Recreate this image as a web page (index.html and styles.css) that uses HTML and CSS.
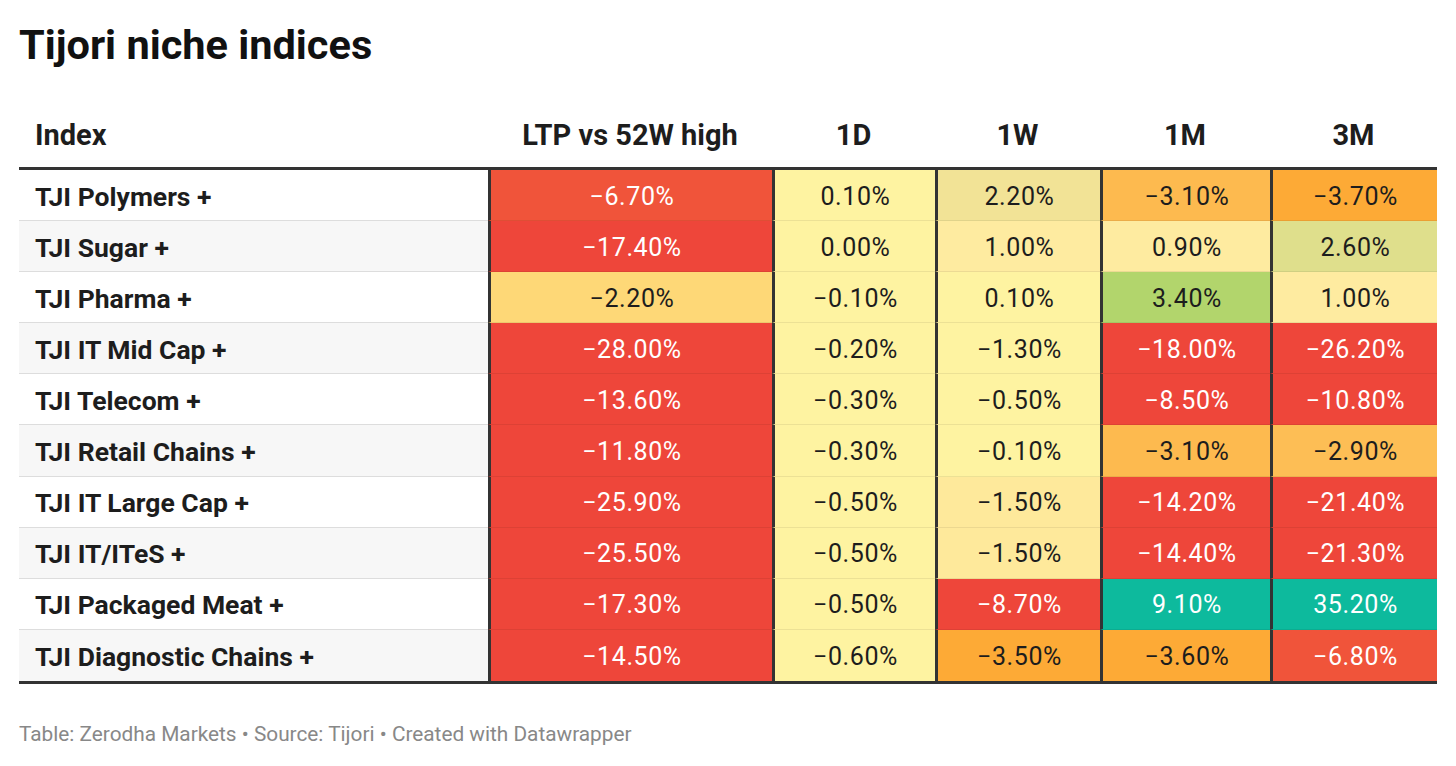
FILE: index.html
```html
<!DOCTYPE html>
<html lang="en">
<head>
<meta charset="utf-8">
<title>Tijori niche indices</title>
<link rel="stylesheet" href="styles.css">
</head>
<body>
<div class="chart">
  <h1 class="title">Tijori niche indices</h1>
  <div class="grid">
    <div class="th th-left">Index</div>
    <div class="th">LTP vs 52W high</div>
    <div class="th">1D</div>
    <div class="th">1W</div>
    <div class="th">1M</div>
    <div class="th">3M</div>

    <div class="name">TJI Polymers +</div>
    <div class="c c-red2 light">−6.70%</div>
    <div class="c c-y1">0.10%</div>
    <div class="c c-khaki">2.20%</div>
    <div class="c c-or1">−3.10%</div>
    <div class="c c-or2">−3.70%</div>

    <div class="name alt">TJI Sugar +</div>
    <div class="c c-red light">−17.40%</div>
    <div class="c c-y1">0.00%</div>
    <div class="c c-y2">1.00%</div>
    <div class="c c-y2">0.90%</div>
    <div class="c c-olive">2.60%</div>

    <div class="name">TJI Pharma +</div>
    <div class="c c-y3">−2.20%</div>
    <div class="c c-y1">−0.10%</div>
    <div class="c c-y1">0.10%</div>
    <div class="c c-green">3.40%</div>
    <div class="c c-y2">1.00%</div>

    <div class="name alt">TJI IT Mid Cap +</div>
    <div class="c c-red light">−28.00%</div>
    <div class="c c-y1">−0.20%</div>
    <div class="c c-y1">−1.30%</div>
    <div class="c c-red light">−18.00%</div>
    <div class="c c-red light">−26.20%</div>

    <div class="name">TJI Telecom +</div>
    <div class="c c-red light">−13.60%</div>
    <div class="c c-y1">−0.30%</div>
    <div class="c c-y1">−0.50%</div>
    <div class="c c-red light">−8.50%</div>
    <div class="c c-red light">−10.80%</div>

    <div class="name alt">TJI Retail Chains +</div>
    <div class="c c-red light">−11.80%</div>
    <div class="c c-y1">−0.30%</div>
    <div class="c c-y1">−0.10%</div>
    <div class="c c-or1">−3.10%</div>
    <div class="c c-or1b">−2.90%</div>

    <div class="name">TJI IT Large Cap +</div>
    <div class="c c-red light">−25.90%</div>
    <div class="c c-y1">−0.50%</div>
    <div class="c c-y4">−1.50%</div>
    <div class="c c-red light">−14.20%</div>
    <div class="c c-red light">−21.40%</div>

    <div class="name alt">TJI IT/ITeS +</div>
    <div class="c c-red light">−25.50%</div>
    <div class="c c-y1">−0.50%</div>
    <div class="c c-y4">−1.50%</div>
    <div class="c c-red light">−14.40%</div>
    <div class="c c-red light">−21.30%</div>

    <div class="name">TJI Packaged Meat +</div>
    <div class="c c-red light">−17.30%</div>
    <div class="c c-y1">−0.50%</div>
    <div class="c c-red light">−8.70%</div>
    <div class="c c-teal light">9.10%</div>
    <div class="c c-teal light">35.20%</div>

    <div class="name alt last">TJI Diagnostic Chains +</div>
    <div class="c c-red light last">−14.50%</div>
    <div class="c c-y1 last">−0.60%</div>
    <div class="c c-or2 last">−3.50%</div>
    <div class="c c-or2 last">−3.60%</div>
    <div class="c c-red2 light last">−6.80%</div>
  </div>
  <p class="footer">Table: Zerodha Markets • Source: Tijori • Created with Datawrapper</p>
</div>
</body>
</html>
```

FILE: styles.css
```css
html, body {
  margin: 0;
  padding: 0;
  background: #ffffff;
}

body {
  font-family: Roboto, "Liberation Sans", sans-serif;
  color: #1d1d1d;
}

.chart {
  padding: 0 19px;
  width: 1418px;
}

.title {
  margin: 24px 0 0 0;
  font-size: 41.5px;
  line-height: 42px;
  font-weight: 700;
  color: #111111;
}

.grid {
  display: grid;
  grid-template-columns: 469px 284px 163px 165px 170px 167px;
  grid-template-rows: 104px;
  grid-auto-rows: 51.1px;
  border-bottom: 3px solid #333333;
}

.th {
  display: flex;
  align-items: flex-end;
  justify-content: center;
  padding-bottom: 17px;
  font-size: 29px;
  line-height: 29px;
  font-weight: 700;
  color: #1d1d1d;
  border-bottom: 3px solid #333333;
  box-sizing: border-box;
}

.th-left {
  justify-content: flex-start;
  padding-left: 16px;
}

.name {
  display: flex;
  align-items: center;
  padding-left: 16px;
  font-size: 26.5px;
  font-weight: 700;
  color: #1d1d1d;
  background: #ffffff;
  border-bottom: 1px solid #dddddd;
  box-sizing: border-box;
  padding-top: 2px;
}

.name.alt {
  background: #f7f7f7;
}

.c {
  display: flex;
  align-items: center;
  justify-content: center;
  font-size: 25px;
  letter-spacing: 0.6px;
  color: #1d1d1d;
  border-left: 3px solid #333333;
  border-bottom: 1px solid rgba(0, 0, 0, 0.07);
  box-sizing: border-box;
  padding-top: 2px;
  padding-left: 1px;
}

.last {
  border-bottom: none;
}

.light {
  color: #ffffff;
}

.c-red { background: #ee463a; }
.c-red2 { background: #f0543a; }
.c-y1 { background: #fef3a1; }
.c-y2 { background: #feeba0; }
.c-y3 { background: #fed877; }
.c-y4 { background: #fee99b; }
.c-khaki { background: #f2e396; }
.c-olive { background: #dfdf8c; }
.c-green { background: #b2d56c; }
.c-or1 { background: #fdba4f; }
.c-or1b { background: #fdbe55; }
.c-or2 { background: #fdaa36; }
.c-teal { background: #0dba9d; }

.footer {
  margin: 38px 0 0 0;
  font-size: 20.8px;
  line-height: 24px;
  color: #888888;
}
```
